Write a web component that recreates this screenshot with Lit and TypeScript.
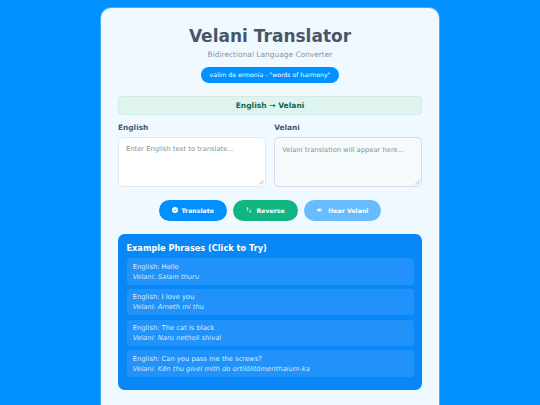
import { LitElement, html, css } from "lit";
import { customElement } from "lit/decorators.js";

const phrases = [
  ["Hello", "Salam thuru"],
  ["I love you", "Ameth mi thu"],
  ["The cat is black", "Naru netholi shival"],
  ["Can you pass me the screws?", "Kēn thu givel mith do ortilōlitōmenthaium-ka"],
];

@customElement("app-root")
export class AppRoot extends LitElement {
  static styles = css`
    :host { display: block; height: 405px; overflow: hidden; background: #0090ff; font-family: "DejaVu Sans", sans-serif; }
    * { box-sizing: border-box; }
    .page { padding: 8px 0 0; display: flex; justify-content: center; }
    .card { width: 338px; height: 420px; background: #f0f9ff; border-radius: 10px; padding: 17px; box-shadow: 0 0 0 1px rgba(255,255,255,.25); display: flex; flex-direction: column; }
    h1 { margin: 0; text-align: center; font-size: 17px; line-height: 23px; font-weight: 700; color: #4a5568; }
    .sub { margin: 2px 0 0; text-align: center; font-size: 7.45px; line-height: 10px; color: #8a94a6; }
    .tagrow { display: flex; justify-content: center; margin-top: 7px; }
    .tag { background: #0090ff; color: #fff; font-size: 6.15px; line-height: 10px; padding: 3px 9px; border-radius: 8px; height: 16px; }
    .mode { margin-top: 13px; height: 19px; background: #dff3ef; border: 1px solid #d2ebe7; border-radius: 3.5px; color: #14674f; font-size: 7.55px; font-weight: 700; display: flex; align-items: center; justify-content: center; }
    .cols { display: grid; grid-template-columns: 1fr 1fr; gap: 8.5px; margin-top: 8px; }
    label { display: block; font-size: 7.4px; line-height: 10px; font-weight: 700; color: #4a5568; margin-bottom: 4px; }
    .ta { height: 50px; border: 1px solid #e2e8f0; border-radius: 5px; background: #fff; padding: 6px 7px; font-size: 6.75px; line-height: 10px; color: #8a8f98; position: relative; }
    .ta.out { background: #f7fafc; border-color: #d5dbe6; padding-top: 7px; }
    .grip { position: absolute; right: 1px; bottom: 1px; display: block; }
    .btns { display: flex; justify-content: center; gap: 6.6px; margin-top: 12.5px; }
    .btn { height: 21.5px; border-radius: 11px; color: #fff; font-size: 6.2px; font-weight: 700; display: flex; align-items: center; gap: 4px; padding: 0 13px; }
    .blue { background: #0090ff; }
    .green { background: #10b582; }
    .light { background: #66bcff; }
    .examples { margin-top: 12.5px; height: 156px; background: #0787f8; border-radius: 6.5px; padding: 9px 8.5px; color: #fff; }
    h3 { margin: 0 0 5.5px; font-size: 8.2px; line-height: 10px; font-weight: 700; }
    .ph { height: 26.5px; background: #2092f9; border-radius: 3.5px; padding: 3.5px 6.3px; margin-bottom: 4.3px; font-size: 6.75px; line-height: 10px; color: #d9edff; }
    .ph i { display: block; color: #cfe8ff; }
  `;

  render() {
    return html`<div class="page"><div class="card">
      <h1>Velani Translator</h1>
      <p class="sub">Bidirectional Language Converter</p>
      <div class="tagrow"><span class="tag">valim de ermonia - "words of harmony"</span></div>
      <div class="mode">English → Velani</div>
      <div class="cols">
        <div><label>English</label><div class="ta">Enter English text to translate...${this.grip()}</div></div>
        <div><label>Velani</label><div class="ta out">Velani translation will appear here...${this.grip()}</div></div>
      </div>
      <div class="btns">
        <div class="btn blue"><svg width="6" height="6" viewBox="0 0 10 10"><circle cx="5" cy="5" r="5" fill="#fff"/><path d="M2.8 5.2 4.4 6.8 7.3 3.6" fill="none" stroke="#0090ff" stroke-width="1.4"/></svg>Translate</div>
        <div class="btn green"><svg width="6" height="6" viewBox="0 0 10 10" fill="none" stroke="#fff" stroke-width="1.2"><path d="M2.5 1v5M1.2 2.4 2.5 1l1.3 1.4M7 4v5M5.7 7.6 7 9l1.3-1.4"/></svg>Reverse</div>
        <div class="btn light"><svg width="7" height="6" viewBox="0 0 12 10" fill="#fff"><path d="M0 3.5h2.5L6 1v8L2.5 6.5H0z"/><path d="M7.5 3.3a2.2 2.2 0 0 1 0 3.4" fill="none" stroke="#fff"/></svg>Hear Velani</div>
      </div>
      <div class="examples">
        <h3>Example Phrases (Click to Try)</h3>
        ${phrases.map(([e, v]) => html`<div class="ph">English: ${e}<i>Velani: ${v}</i></div>`)}
      </div>
    </div></div>`;
  }

  grip() {
    return html`<svg class="grip" width="6" height="6" viewBox="0 0 6 6" fill="none" stroke="#9aa3ad" stroke-width=".7"><path d="M1 5.5 5.5 1M3.5 5.5l2-2"/></svg>`;
  }
}
